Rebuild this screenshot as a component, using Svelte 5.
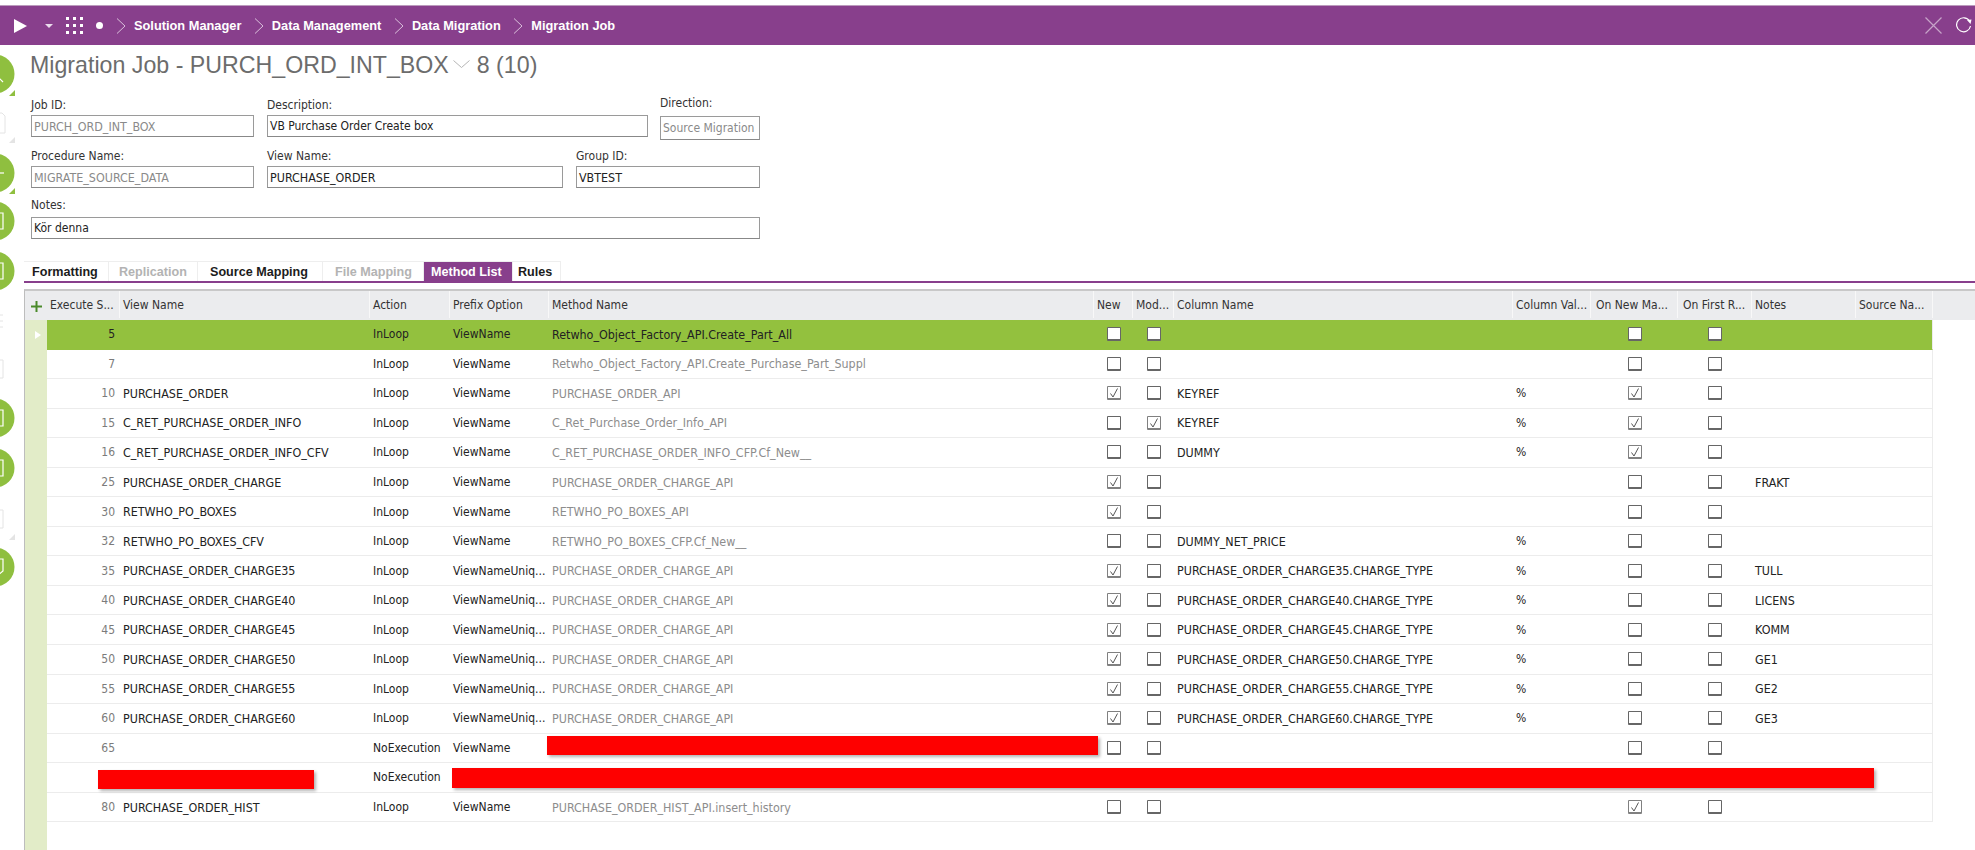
<script>
  const rows = [
    { n: '5', v: '', a: 'InLoop', p: 'ViewName', m: 'Retwho_Object_Factory_API.Create_Part_All', dark: true, sel: true },
    { n: '7', v: '', a: 'InLoop', p: 'ViewName', m: 'Retwho_Object_Factory_API.Create_Purchase_Part_Suppl' },
    { n: '10', v: 'PURCHASE_ORDER', a: 'InLoop', p: 'ViewName', m: 'PURCHASE_ORDER_API', nw: 1, c: 'KEYREF', val: '%', on: 1 },
    { n: '15', v: 'C_RET_PURCHASE_ORDER_INFO', a: 'InLoop', p: 'ViewName', m: 'C_Ret_Purchase_Order_Info_API', mod: 1, c: 'KEYREF', val: '%', on: 1 },
    { n: '16', v: 'C_RET_PURCHASE_ORDER_INFO_CFV', a: 'InLoop', p: 'ViewName', m: 'C_RET_PURCHASE_ORDER_INFO_CFP.Cf_New__', c: 'DUMMY', val: '%', on: 1 },
    { n: '25', v: 'PURCHASE_ORDER_CHARGE', a: 'InLoop', p: 'ViewName', m: 'PURCHASE_ORDER_CHARGE_API', nw: 1, notes: 'FRAKT' },
    { n: '30', v: 'RETWHO_PO_BOXES', a: 'InLoop', p: 'ViewName', m: 'RETWHO_PO_BOXES_API', nw: 1 },
    { n: '32', v: 'RETWHO_PO_BOXES_CFV', a: 'InLoop', p: 'ViewName', m: 'RETWHO_PO_BOXES_CFP.Cf_New__', c: 'DUMMY_NET_PRICE', val: '%' },
    ...[['35', 'TULL'], ['40', 'LICENS'], ['45', 'KOMM'], ['50', 'GE1'], ['55', 'GE2'], ['60', 'GE3']].map(([n, notes]) => ({
      n, v: 'PURCHASE_ORDER_CHARGE' + n, a: 'InLoop', p: 'ViewNameUniq...', m: 'PURCHASE_ORDER_CHARGE_API', nw: 1,
      c: 'PURCHASE_ORDER_CHARGE' + n + '.CHARGE_TYPE', val: '%', notes
    })),
    { n: '65', v: '', a: 'NoExecution', p: 'ViewName', m: '' },
    { n: '', v: '', a: 'NoExecution', p: '', m: '', nocheck: true },
    { n: '80', v: 'PURCHASE_ORDER_HIST', a: 'InLoop', p: 'ViewName', m: 'PURCHASE_ORDER_HIST_API.insert_history', on: 1 }
  ];
  const heads = ['Execute S...', 'View Name', 'Action', 'Prefix Option', 'Method Name', 'New', 'Mod...', 'Column Name', 'Column Val...', 'On New Ma...', 'On First R...', 'Notes', 'Source Na...'];
  const tabs = [
    { t: 'Formatting', w: 85 }, { t: 'Replication', w: 89, off: true }, { t: 'Source Mapping', w: 125 },
    { t: 'File Mapping', w: 101, off: true }, { t: 'Method List', w: 89, on: true }, { t: 'Rules', w: 48 }
  ];
  const crumbs = ['Solution Manager', 'Data Management', 'Data Migration', 'Migration Job'];
  const dots = [0, 1, 2];
</script>

{#snippet check(on)}
  <span class="box" class:on>
    {#if on}
      <svg viewBox="0 0 14 14" width="14" height="14"><path d="M3.5 7.5 L6 11 L10.5 2.5" fill="none" stroke="#555" stroke-width="1" /></svg>
    {/if}
  </span>
{/snippet}

<div class="page">
  <header class="bar">
    <svg class="play" viewBox="0 0 13 14" width="13" height="14"><path d="M0 0 L13 7 L0 14 Z" fill="#fff" /></svg>
    <svg class="caret" viewBox="0 0 8 4" width="8" height="4"><path d="M0 0 H8 L4 4 Z" fill="#eadcec" /></svg>
    <svg class="apps" viewBox="0 0 17 17" width="17" height="17">
      {#each dots as r}
        {#each dots as c}
          <rect x={c * 7} y={r * 7} width="3" height="3" fill="#fff" />
        {/each}
      {/each}
    </svg>
    <span class="dot"></span>
    {#each crumbs as c}
      <svg class="chev" viewBox="0 0 10 16" width="10" height="16"><path d="M1 .5 L9 8 L1 15.5" fill="none" stroke="#d9bfdb" stroke-width="1" /></svg>
      <span class="crumb">{c}</span>
    {/each}
    <span class="spacer"></span>
    <svg class="close" viewBox="0 0 17 17" width="17" height="17"><path d="M.5 .5 L16.5 16.5 M16.5 .5 L.5 16.5" stroke="#c6a3c8" stroke-width="1.2" /></svg>
    <svg class="reload" viewBox="0 0 17 17" width="17" height="17"><path d="M14.5 4 A7 7 0 1 0 15.5 9" fill="none" stroke="#fff" stroke-width="1.2" /><path d="M12 3 L16.5 2.5 L15.5 7 Z" fill="#fff" /></svg>
  </header>

  <div class="body">
    <svg class="rail" viewBox="0 0 24 805" width="24" height="805">
      <g fill="#8fbf3f">
        <circle cx="-5" cy="29" r="19.5" />
        <circle cx="-5" cy="128" r="19.5" />
        <circle cx="-5" cy="176" r="19.5" />
        <circle cx="-5" cy="226" r="19.5" />
        <circle cx="-5" cy="373" r="19.5" />
        <circle cx="-5" cy="423" r="19.5" />
        <circle cx="-5" cy="522" r="19.5" />
        <path d="M15 45 V51 H9 Z" />
        <path d="M15 143 V149 H9 Z" />
      </g>
      <g fill="none" stroke="#fff" stroke-width="1.2">
        <path d="M-2 32 L3 37" />
        <path d="M-5 128 H4" />
        <path d="M-4 168 H3 V184 H-4" />
        <path d="M-4 218 H3 V234 H-4" />
        <path d="M-4 365 H3 V381 H-4" />
        <path d="M-4 415 H3 V431 H-4" />
        <path d="M-4 514 H3 V526 L-2 530" />
      </g>
      <g fill="none" stroke="#e4e4e4" stroke-width="1">
        <path d="M-2 68 H2 L5 71 V88 H-2" />
        <path d="M-2 270 H3 M-2 276 H3 M-2 282 H3" />
        <path d="M-2 315 H3 V333 H-2" />
        <path d="M-2 465 H3 V483 H-2" />
      </g>
      <g fill="#e4e4e4">
        <path d="M15 92 V98 H9 Z" />
        <path d="M15 489 V495 H9 Z" />
      </g>
    </svg>

    <main class="main">
      <h1 class="title">
        <span>Migration Job - PURCH_ORD_INT_BOX</span>
        <svg viewBox="0 0 17 8" width="17" height="8"><path d="M.5 .5 L8.5 7.5 L16.5 .5" fill="none" stroke="#b5b5b5" stroke-width="1" /></svg>
        <span>8 (10)</span>
      </h1>

      <form class="form">
        <div class="field"><span class="lab">Job ID:</span><div class="input ro"><span class="cap">PURCH_ORD_INT_BOX</span></div></div>
        <div class="field span2"><span class="lab">Description:</span><div class="input"><span>VB Purchase Order Create box</span></div></div>
        <div class="field dir"><span class="lab">Direction:</span><div class="input ro tall"><span>Source Migration</span></div></div>
        <div class="field"><span class="lab">Procedure Name:</span><div class="input ro"><span class="cap">MIGRATE_SOURCE_DATA</span></div></div>
        <div class="field"><span class="lab">View Name:</span><div class="input"><span class="cap">PURCHASE_ORDER</span></div></div>
        <div class="field span2"><span class="lab">Group ID:</span><div class="input"><span class="cap">VBTEST</span></div></div>
        <div class="field all"><span class="lab">Notes:</span><div class="input"><span>Kör denna</span></div></div>
      </form>

      <nav class="tabs">
        {#each tabs as t}
          <span class="tab" class:off={t.off} class:on={t.on} style="width:{t.w}px">{t.t}</span>
        {/each}
      </nav>

      <section class="grid">
        <div class="row head">
          <svg class="plus" viewBox="0 0 11 11" width="11" height="11"><path d="M5.5 0 V11 M0 5.5 H11" stroke="#4a8a2a" stroke-width="2" /></svg>
          {#each heads as h}
            <span class="hc">{h}</span>
          {/each}
        </div>
        {#each rows as r}
          <div class="row" class:sel={r.sel}>
            <span class="gut">
              {#if r.sel}<svg viewBox="0 0 6 8" width="6" height="8"><path d="M0 0 L6 4 L0 8 Z" fill="#fff" /></svg>{/if}
            </span>
            <span class="c num">{r.n}</span>
            <span class="c cap">{r.v}</span>
            <span class="c">{r.a}</span>
            <span class="c">{r.p}</span>
            <span class="c meth" class:dark={r.dark}>{r.m}</span>
            {#if r.nocheck}
              <span class="c"></span><span class="c"></span>
            {:else}
              <span class="c mid">{@render check(r.nw)}</span>
              <span class="c mid">{@render check(r.mod)}</span>
            {/if}
            <span class="c cap">{r.c ?? ''}</span>
            <span class="c">{r.val ?? ''}</span>
            {#if r.nocheck}
              <span class="c"></span><span class="c"></span>
            {:else}
              <span class="c mid">{@render check(r.on)}</span>
              <span class="c mid">{@render check(false)}</span>
            {/if}
            <span class="c cap">{r.notes ?? ''}</span>
            <span class="c last"></span>
          </div>
        {/each}
      </section>
    </main>
  </div>

  <div class="red r1"></div>
  <div class="red r2"></div>
  <div class="red r3"></div>
</div>

<style>
  :global(body) { margin: 0; background: #fff; }
  .page {
    position: relative; width: 1975px; height: 850px; overflow: hidden; background: #fff;
    font-family: "DejaVu Sans Condensed", "DejaVu Sans", sans-serif; color: #222;
  }
  .bar {
    box-sizing: border-box; margin-top: 5px; height: 40px; background: #883f8c; border-top: 1px solid #bb9bbd;
    display: flex; align-items: center; color: #fff; padding-right: 3px;
    font-family: "Liberation Sans", Arial, sans-serif;
  }
  .bar svg { flex: none; }
  .play { margin-left: 14px; }
  .caret { margin-left: 18px; }
  .apps { margin-left: 13px; }
  .dot { width: 7px; height: 7px; border-radius: 50%; background: #fff; margin-left: 13px; flex: none; }
  .chev { margin: 0 8px 0 12.5px; }
  .dot + .chev { margin-left: 13px; }
  .crumb { font-weight: 700; font-size: 12.8px; white-space: nowrap; }
  .spacer { flex: 1; }
  .close { margin-right: 13px; }

  .body { display: flex; }
  .rail { flex: none; overflow: hidden; }
  .main { flex: none; width: 1951px; }

  .title {
    margin: 5px 0 0 6px; height: 30px; font-size: 23.2px; line-height: 30px; font-weight: 400; color: #6c6c6c;
    font-family: "Liberation Sans", Arial, sans-serif;
    display: flex; align-items: center; gap: 4px; white-space: nowrap;
  }
  .title svg { margin-top: -3px; margin-right: 3px; }

  .form {
    margin: 16px 0 0 7px; width: 729px; display: grid;
    grid-template-columns: 223px 296px 72px 99px; column-gap: 13px; grid-auto-rows: 51px;
  }
  .field { display: flex; flex-direction: column; min-width: 0; }
  .span2 { grid-column: span 2; }
  .all { grid-column: 1 / -1; }
  .dir { margin-top: -2px; margin-left: -1px; }
  .lab { height: 16px; line-height: 18px; font-size: 12px; color: #333; white-space: nowrap; }
  .all .lab { line-height: 15px; }
  .input {
    box-sizing: border-box; height: 22px; margin-top: 3px; border: 1px solid #9a9a9a; border-bottom-color: #888; background: #fff;
    display: flex; align-items: center; padding-left: 2px; font-size: 12px; color: #222; overflow: hidden; white-space: nowrap;
  }
  .input.ro { color: #8a8a8a; }
  .input.tall { height: 24px; margin-top: 6px; }
  .cap { font-size: 12.4px; }

  .tabs {
    margin: 12px 0 0 0; height: 20px; display: flex; border-bottom: 2px solid #883f8c;
    font-family: "Liberation Sans", Arial, sans-serif;
  }
  .tab {
    box-sizing: border-box; flex: none; height: 20px; line-height: 20px; padding-left: 8px; font-size: 12.6px; font-weight: 700; color: #1c1c1c;
    border-right: 1px solid #eee; border-top: 1px solid #eee; white-space: nowrap;
  }
  .tab.off { color: #b3b3b3; padding-left: 10px; }
  .tab.on { background: #883f8c; color: #fff; padding-left: 7px; }
  .tab:nth-child(3) { padding-left: 12px; }
  .tab:nth-child(4) { padding-left: 12px; }
  .tab:nth-child(5) { padding-left: 7px; }
  .tab:nth-child(6) { padding-left: 5px; }

  .grid {
    margin-top: 6px; height: 560px; border-left: 1px solid #bdbdbd; border-top: 2px solid #c8c8c8;
    background: linear-gradient(to right, #e2ecc8 22px, transparent 22px);
  }
  .row {
    box-sizing: border-box; height: 29.55px; display: grid; width: 1908px;
    grid-template-columns: 22px 73px 250px 80px 99px 545px 39px 41px 339px 78px 87px 74px 104px 77px;
    font-size: 12px; align-items: stretch;
  }
  .head { height: 29px; background: #ebecee; color: #333; font-size: 12px; width: 1950px; padding-bottom: 2px; }
  .plus { align-self: center; justify-self: center; margin-top: 4px; margin-left: 1px; }
  .hc { display: flex; align-items: center; padding-left: 3px; border-right: 1px solid #f8f8f8; white-space: nowrap; overflow: hidden; }
  .hc:nth-child(11), .hc:nth-child(12) { padding-left: 5px; }
  .c { display: flex; align-items: center; padding-left: 3px; border-bottom: 1px solid #ececec; white-space: nowrap; min-width: 0; background: #fff; }
  .last { border-right: 1px solid #ececec; }
  .gut { display: flex; align-items: center; padding-left: 10px; }
  .num { justify-content: flex-end; padding: 0 5px 0 0; color: #7b7b7b; }
  .meth { color: #8d8d8d; font-size: 12.4px; }
  .meth.dark { color: #222; font-size: 12.4px; }
  .mid { justify-content: center; padding: 0; }
  .sel .c { background: #93c13e; border-bottom-color: #93c13e; }
  .sel .num { color: #222; }
  .box {
    box-sizing: border-box; width: 14px; height: 14px; background: #fff; border: 1px solid #666; border-bottom-width: 2px; border-radius: 1px; display: block; overflow: visible;
  }
  .box.on { border-color: #808080; }
  .box svg { display: block; margin: -1px; }

  .red { position: absolute; background: #fe0000; box-shadow: 2px 2px 3px rgba(0, 0, 0, .3); }
  .r1 { left: 547px; top: 736px; width: 551px; height: 19px; }
  .r2 { left: 98px; top: 770px; width: 216px; height: 19px; }
  .r3 { left: 452px; top: 768px; width: 1422px; height: 20px; }
</style>
